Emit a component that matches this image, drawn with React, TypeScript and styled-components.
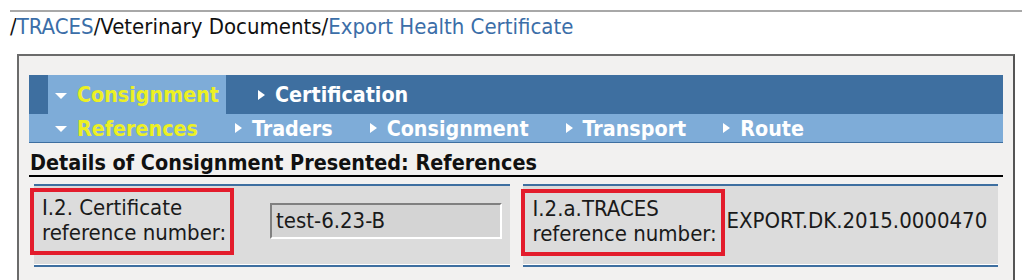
import React from "react";
import styled, { createGlobalStyle } from "styled-components";

const GlobalStyle = createGlobalStyle`
  body {
    margin: 0;
    background: #ffffff;
    font-family: "DejaVu Sans Condensed", "DejaVu Sans", sans-serif;
    color: #111;
    overflow: hidden;
  }
`;

const Page = styled.div`
  padding: 10px 2px 0 10px;
`;

const Breadcrumb = styled.div`
  border-top: 2px solid #a8a8a8;
  font-size: 22px;
  line-height: 26px;
  padding-top: 2px;
  white-space: nowrap;
`;

const Crumb = styled.span<{ $link?: boolean }>`
  color: ${(p) => (p.$link ? "#3b6ea8" : "#111")};
`;

const Panel = styled.div`
  margin: 14px 7px 0 7px;
  height: 205px;
  background: #f2f1f0;
  border-top: 2px solid #6b6b6b;
  border-left: 2px solid #6b6b6b;
  border-right: 2px solid #555;
  padding: 19px 10px 0 10px;
`;

const TabRow = styled.div<{ $top?: boolean }>`
  display: flex;
  align-items: stretch;
  height: ${(p) => (p.$top ? "39px" : "28px")};
  background: ${(p) => (p.$top ? "#3e6fa0" : "#7eacd8")};
  padding-left: 19px;
  ${(p) => (p.$top ? "" : "border-bottom: 1px solid #3e6fa0;")}
`;

const Tab = styled.div<{ $active?: boolean; $bg?: boolean; $pad: string }>`
  display: flex;
  align-items: center;
  gap: 10px;
  padding: ${(p) => p.$pad};
  background: ${(p) => (p.$bg ? "#7eacd8" : "transparent")};
  color: ${(p) => (p.$active ? "#ecf024" : "#ffffff")};
  font-weight: bold;
  font-size: 21.3px;
  white-space: nowrap;
`;

const Arrow = styled.span<{ $down?: boolean }>`
  display: inline-block;
  width: 0;
  height: 0;
  ${(p) =>
    p.$down
      ? `border-left: 6px solid transparent;
         border-right: 6px solid transparent;
         border-top: 6px solid #ffffff;
         margin-top: 2px;`
      : `border-top: 5px solid transparent;
         border-bottom: 5px solid transparent;
         border-left: 7px solid #ffffff;`}
`;

const Heading = styled.div`
  margin-top: 8px;
  font-size: 21.4px;
  font-weight: bold;
  line-height: 24px;
  padding-left: 1px;
  border-bottom: 2px solid #000;
  color: #111;
`;

const FieldRow = styled.div`
  display: grid;
  grid-template-columns: 1fr 1fr;
  gap: 13px;
  padding: 0 5px;
  margin-top: 7px;
`;

const Cell = styled.div`
  display: flex;
  align-items: flex-start;
  height: 79px;
  background: #dcdcdc;
  border-top: 2px solid #3e6fa0;
  border-bottom: 2px solid #3e6fa0;
  box-shadow: inset 0 -1px 0 #ffffff;
`;

const Label = styled.div<{ $shift: number; $top: number }>`
  box-sizing: border-box;
  width: 204px;
  height: 67px;
  margin-left: ${(p) => p.$shift}px;
  margin-top: ${(p) => p.$top}px;
  border: 4px solid #e31c2c;
  padding: 3px 0 0 8px;
  font-size: 22px;
  line-height: 25px;
  color: #1a1a1a;
`;

const Input = styled.div`
  box-sizing: border-box;
  width: 232px;
  height: 36px;
  margin: 17px 0 0 36px;
  background: #d4d4d4;
  border-top: 2px solid #808080;
  border-left: 2px solid #808080;
  border-bottom: 2px solid #ffffff;
  border-right: 2px solid #ffffff;
  padding-left: 4px;
  font-size: 22px;
  line-height: 31px;
  color: #1a1a1a;
`;

const Value = styled.div`
  margin: 22px 0 0 2px;
  font-size: 22px;
  line-height: 26px;
  color: #1a1a1a;
  white-space: nowrap;
`;

const subTabs = ["Traders", "Consignment", "Transport", "Route"];

export default function App() {
  return (
    <Page>
      <GlobalStyle />
      <Breadcrumb>
        <Crumb>/</Crumb>
        <Crumb $link>TRACES</Crumb>
        <Crumb>/Veterinary Documents/</Crumb>
        <Crumb $link>Export Health Certificate</Crumb>
      </Breadcrumb>
      <Panel>
        <TabRow $top>
          <Tab $active $bg $pad="0 7px">
            <Arrow $down />
            Consignment
          </Tab>
          <Tab $pad="0 0 0 32px">
            <Arrow />
            Certification
          </Tab>
        </TabRow>
        <TabRow>
          <Tab $active $pad="0 30px 0 7px">
            <Arrow $down />
            References
          </Tab>
          {subTabs.map((t) => (
            <Tab key={t} $pad="0 30px 0 7px">
              <Arrow />
              {t}
            </Tab>
          ))}
        </TabRow>
        <Heading>Details of Consignment Presented: References</Heading>
        <FieldRow>
          <Cell>
            <Label $shift={-4} $top={2}>
              I.2. Certificate
              <br />
              reference number:
            </Label>
            <Input>test-6.23-B</Input>
          </Cell>
          <Cell>
            <Label $shift={-2} $top={3}>
              I.2.a.TRACES
              <br />
              reference number:
            </Label>
            <Value>EXPORT.DK.2015.0000470</Value>
          </Cell>
        </FieldRow>
      </Panel>
    </Page>
  );
}
